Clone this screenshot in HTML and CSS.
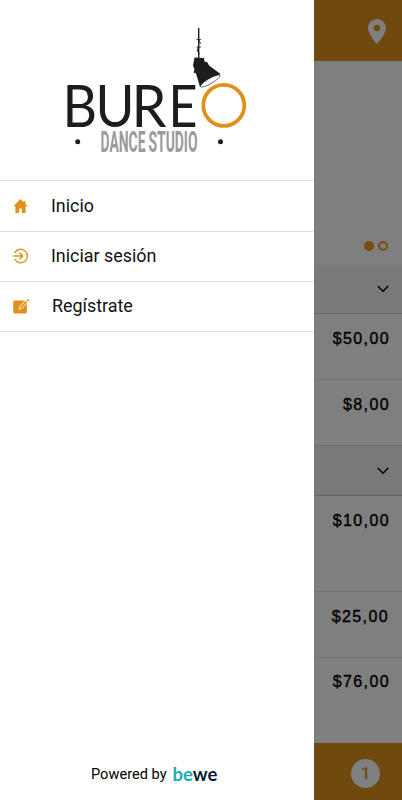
FILE: index.html
```html
<!DOCTYPE html>
<html lang="es">
<head>
    <meta charset="UTF-8">
    <meta name="viewport" content="width=device-width, initial-scale=1.0">
    <title>Bureo Dance Studio</title>
    <link rel="stylesheet" href="styles.css">
</head>
<body>
    <div class="page">
        <header class="top-bar">
            <svg class="pin" width="18" height="25" viewBox="0 0 18 25">
                <path fill-rule="evenodd" d="M9 0a9 9 0 0 0-9 9c0 6.300 9 16 9 16s9-9.700 9-16a9 9 0 0 0-9-9zm0 5.800a3.200 3.200 0 1 1 0 6.400 3.200 3.200 0 0 1 0-6.400z"/>
            </svg>
        </header>
        <div class="carousel">
            <span class="dot dot-active"></span>
            <span class="dot"></span>
        </div>
        <div class="category">
            <svg class="arrow" width="12" height="8" viewBox="0 0 12 8"><path d="M.8 1L6 6.200 11.200 1"/></svg>
        </div>
        <div class="service">$50,00</div>
        <div class="service">$8,00</div>
        <div class="category category-second">
            <svg class="arrow" width="12" height="8" viewBox="0 0 12 8"><path d="M.8 1L6 6.200 11.200 1"/></svg>
        </div>
        <div class="service service-tall">$10,00</div>
        <div class="service price-wide">$25,00</div>
        <div class="service service-end">$76,00</div>
        <footer class="bottom-bar">
            <span class="badge">1</span>
        </footer>
    </div>

    <div class="overlay"></div>

    <aside class="menu">
        <div class="logo">
            <svg width="190" height="135" viewBox="60 25 190 135">
                <!-- lámpara -->
                <path class="cable" d="M198.700 28v30"/>
                <path class="cable-thin" d="M196.500 39.500h4.500M196.500 47h4.500M198 47l-1 4 3 3M199 40l1.500 4"/>
                <path class="lamp" d="M194.500 57.500l9.500.5.500 3.500 3 1 1.500 3 11.500 8.500-20.500 13-4-13.500-2.500-1 1-3-1.500-4z"/>
                <ellipse class="lamp-light" cx="210.200" cy="81" rx="11.300" ry="2.600" transform="rotate(-30 210.200 81)"/>
                <!-- nombre -->
                <g class="logo-name">
                    <text x="62.500" y="126.500" textLength="34.500" lengthAdjust="spacingAndGlyphs">B</text>
                    <text x="95.500" y="126.500" textLength="39" lengthAdjust="spacingAndGlyphs">U</text>
                    <text x="131.500" y="126.500" textLength="35" lengthAdjust="spacingAndGlyphs">R</text>
                    <text x="168.500" y="126.500" textLength="29" lengthAdjust="spacingAndGlyphs">E</text>
                </g>
                <circle class="logo-o" cx="223.800" cy="105.300" r="20.500"/>
                <text class="logo-sub" x="100.500" y="151.800" textLength="97" lengthAdjust="spacingAndGlyphs">DANCE STUDIO</text>
                <circle cx="77.700" cy="141.700" r="2.500"/>
                <circle cx="220.500" cy="141.700" r="2.500"/>
            </svg>
        </div>
        <nav class="menu-list">
            <a class="menu-item menu-item-first" href="#">
                <svg width="16" height="16" viewBox="0 0 16 16"><path class="fill" d="M7.500 1L.4 8.300h2V15h3.800v-4.500h2.600V15h3.800V8.300h2.300l-2.600-2.600V3h-1.500v1.300z"/></svg>
                <span>Inicio</span>
            </a>
            <a class="menu-item" href="#">
                <svg width="16" height="16" viewBox="0 0 16 16"><path class="line" d="M1.700 5A6.700 6.700 0 1 1 1.700 11M.3 8h9.500M6.500 4.800L9.700 8l-3.200 3.200"/></svg>
                <span>Iniciar sesión</span>
            </a>
            <a class="menu-item" href="#">
                <svg width="17" height="16" viewBox="0 0 17 16">
                    <rect class="fill" x=".3" y="2.500" width="13.500" height="13" rx="1.500"/>
                    <path class="pencil-edge" d="M5.500 11.700l1-3.500L13.700 1l2.400 2.300L9 10.600z"/>
                    <path class="fill" d="M6.500 10.800l.7-2.200 5.800-5.800 1.400 1.400-5.800 5.800zM13.700 2.200l1.200-1.300 1.600 1.500-1.300 1.200z"/>
                </svg>
                <span>Regístrate</span>
            </a>
        </nav>
        <div class="powered">
            <span>Powered by</span>
            <span class="bewe">be<span class="we">we</span></span>
        </div>
    </aside>
</body>
</html>
```

FILE: styles.css
```css
* {
    box-sizing: border-box;
}
body {
    margin: 0;
    height: 800px;
    position: relative;
    overflow: hidden;
    font-family: Roboto, sans-serif;
    color: #000;
    background-color: #fff;
}
.page {
    display: flex;
    flex-direction: column;
    height: 800px;
}
.top-bar {
    display: flex;
    justify-content: flex-end;
    height: 61px;
    padding: 19px 16px 0;
    background-color: #df921a;
}
.pin {
    fill: #fff;
}
.carousel {
    display: flex;
    justify-content: flex-end;
    align-items: flex-end;
    gap: 4px;
    height: 204px;
    padding: 0 14px 14px;
}
.dot {
    width: 10px;
    height: 10px;
    border: 2px solid #f0981a;
    border-radius: 50%;
}
.dot-active {
    background-color: #f0981a;
}
.category {
    display: flex;
    justify-content: flex-end;
    align-items: center;
    height: 49px;
    padding: 0 13px;
    background-color: #f2f2f2;
    border-bottom: 1px solid #c8c8c8;
}
.category-second {
    height: 50px;
}
.arrow {
    fill: none;
    stroke: #000;
    stroke-width: 1.5;
}
.service {
    height: 66px;
    padding: 15px 12px 0;
    border-bottom: 1px solid #e0e0e0;
    font-family: "Liberation Sans", Arial, sans-serif;
    font-size: 16px;
    line-height: 20px;
    letter-spacing: 1.4px;
    text-align: right;
    -webkit-text-stroke: 0.4px #000;
}
.service-tall {
    height: 96px;
}
.price-wide {
    padding-right: 13px;
}
.service-end {
    height: 85px;
    padding-top: 14px;
    border-bottom: none;
}
.bottom-bar {
    display: flex;
    justify-content: flex-end;
    align-items: center;
    flex: 1;
    padding: 3px 22px 0;
    background-color: #df921a;
}
.badge {
    width: 29px;
    height: 29px;
    border-radius: 50%;
    background-color: #fff;
    color: #df921a;
    font-size: 17px;
    font-weight: 500;
    line-height: 29px;
    text-align: center;
}
.overlay {
    position: absolute;
    inset: 0;
    background-color: rgba(0, 0, 0, 0.5);
}

/* menú lateral */
.menu {
    position: absolute;
    top: 0;
    left: 0;
    display: flex;
    flex-direction: column;
    width: 314px;
    height: 800px;
    background-color: #fff;
}
.logo {
    height: 180px;
    padding: 25px 0 0 60px;
    fill: #1d1d1b;
}
.logo svg {
    display: block;
    overflow: visible;
}
.logo-name {
    font-family: Lato, sans-serif;
    font-size: 58.5px;
}
.logo-o {
    fill: none;
    stroke: #df921a;
    stroke-width: 3.8;
}
.logo-sub {
    font-family: Roboto, sans-serif;
    font-size: 29px;
    font-weight: 700;
    word-spacing: -1px;
    fill: #9b9b9b;
}
.cable {
    stroke: #1d1d1b;
    stroke-width: 1.4;
}
.cable-thin {
    fill: none;
    stroke: #1d1d1b;
    stroke-width: 0.8;
}
.lamp-light {
    fill: #fff;
    stroke: #1d1d1b;
    stroke-width: 0.6;
}
.menu-list {
    border-top: 1px solid #dedede;
}
.menu-item {
    display: flex;
    align-items: center;
    gap: 22px;
    height: 50px;
    padding: 0 0 2px 13px;
    border-bottom: 1px solid #dedede;
    color: #111;
    font-size: 17.9px;
    text-decoration: none;
}
.menu-item-first {
    height: 51px;
    padding-bottom: 1px;
}
.menu-item .fill {
    fill: #df921a;
}
.menu-item .line {
    fill: none;
    stroke: #df921a;
    stroke-width: 1.4;
}
.menu-item .pencil-edge {
    fill: #fff;
}
.powered {
    display: flex;
    align-items: center;
    gap: 6px;
    margin-top: auto;
    padding: 0 0 14px 91px;
    font-size: 14.6px;
    line-height: 24px;
}
.bewe {
    color: #17aeb0;
    font-family: Lato, sans-serif;
    font-size: 18.5px;
    font-weight: 700;
}
.we {
    color: #071a35;
}
```
